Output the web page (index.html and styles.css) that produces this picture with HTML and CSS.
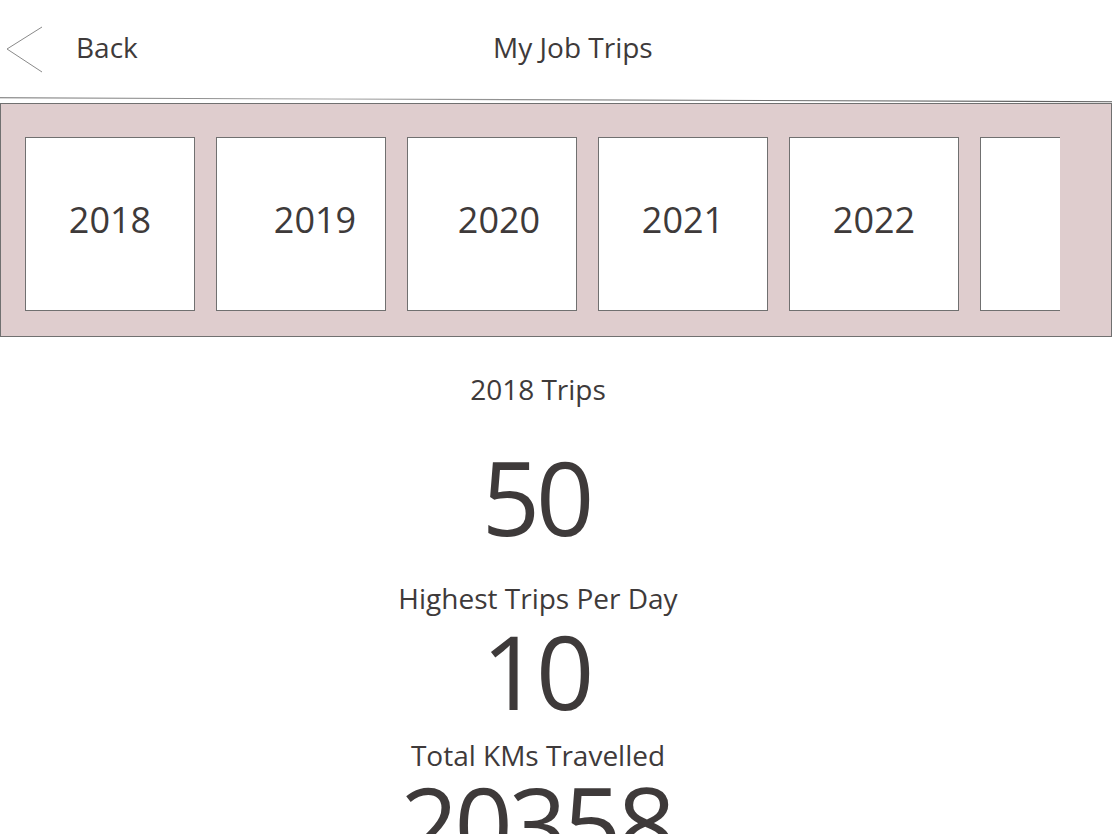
FILE: index.html
```html
<!DOCTYPE html>
<html lang="en">
<head>
<meta charset="utf-8">
<title>My Job Trips</title>
<link rel="stylesheet" href="styles.css">
</head>
<body>
<div class="app">
  <header class="topbar">
    <a class="back" href="#">
      <svg class="chev" width="38" height="48" viewBox="0 0 38 48" aria-hidden="true">
        <polyline points="36,1 1,23 36,46" fill="none" stroke="#8a8a8a" stroke-width="1"/>
      </svg>
      <span class="back-label">Back</span>
    </a>
    <h1 class="title">My Job Trips</h1>
  </header>
  <svg class="rule" width="1112" height="7" viewBox="0 0 1112 7" preserveAspectRatio="none" aria-hidden="true">
    <defs>
      <linearGradient id="rg" x1="0" x2="1" y1="0" y2="0">
        <stop offset="0" stop-color="#6d6d6d"/>
        <stop offset="0.3" stop-color="#a8a8a8"/>
        <stop offset="0.6" stop-color="#7a7a7a"/>
        <stop offset="1" stop-color="#5e5e5e"/>
      </linearGradient>
    </defs>
    <line x1="0" y1="1" x2="1112" y2="5.5" stroke="url(#rg)" stroke-width="1.2"/>
  </svg>
  <section class="years">
    <div class="year-row">
      <button class="year">2018</button>
      <button class="year shift-l">2019</button>
      <button class="year shift-m">2020</button>
      <button class="year">2021</button>
      <button class="year">2022</button>
      <button class="year"></button>
    </div>
  </section>
  <main class="stats">
    <div class="label first">2018 Trips</div>
    <div class="big gap-a">50</div>
    <div class="label gap-b">Highest Trips Per Day</div>
    <div class="big gap-c">10</div>
    <div class="label gap-d">Total KMs Travelled</div>
    <div class="big gap-e">20358</div>
  </main>
</div>
</body>
</html>
```

FILE: styles.css
```css
* { box-sizing: border-box; }
html, body {
  margin: 0;
  padding: 0;
  background: #ffffff;
  overflow: hidden;
}
body {
  font-family: "Open Sans", "Noto Sans", "Liberation Sans", sans-serif;
  color: #3e3a3a;
  width: 1112px;
  height: 834px;
}
.app {
  display: flex;
  flex-direction: column;
  height: 834px;
  overflow: hidden;
}
.topbar {
  height: 97px;
  flex: 0 0 97px;
  display: flex;
  align-items: center;
  padding-right: 104px;
}
.back {
  display: flex;
  align-items: center;
  text-decoration: none;
  color: inherit;
  padding-left: 6px;
}
.chev {
  display: block;
  margin-top: 2px;
}
.back-label {
  margin-left: 32px;
  font-size: 28px;
  line-height: 1;
  margin-top: -4px;
}
.title {
  flex: 1;
  margin: -4px 0 0 0;
  text-align: center;
  font-size: 28px;
  font-weight: 400;
  line-height: 1;
}
.rule {
  display: block;
  height: 6px;
  flex: 0 0 6px;
}
.years {
  height: 234px;
  flex: 0 0 234px;
  background: #dfcdce;
  border: 1px solid #707070;
  padding: 33px 51px 0 24px;
}
.year-row {
  display: flex;
  gap: 21px;
  overflow: hidden;
  height: 174px;
}
.year {
  flex: 0 0 170px;
  height: 174px;
  background: #ffffff;
  border: 1px solid #707070;
  font-family: inherit;
  color: inherit;
  font-size: 36px;
  padding: 0 0 10px 0;
  margin: 0;
  cursor: pointer;
}
.year.shift-l {
  padding-left: 28px;
}
.year.shift-m {
  padding-left: 14px;
}
.stats {
  display: flex;
  flex-direction: column;
  align-items: center;
  padding-right: 36px;
  min-height: 0;
  overflow: hidden;
}
.label {
  font-size: 28px;
  line-height: 30px;
}
.big {
  font-size: 102px;
  line-height: 78px;
  letter-spacing: -4px;
  margin-left: -4px;
}
.first { margin-top: 37px; }
.gap-a { margin-top: 54px; }
.gap-b { margin-top: 47px; }
.gap-c { margin-top: 19px; }
.gap-d { margin-top: 30px; }
.gap-e { margin-top: 14px; }
```
